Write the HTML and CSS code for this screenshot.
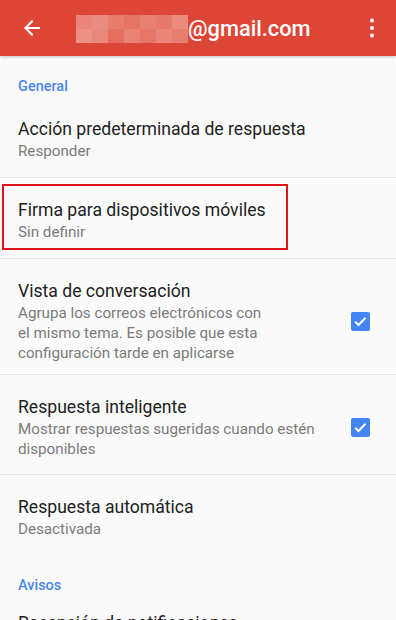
FILE: index.html
```html
<!DOCTYPE html>
<html lang="es">
<head>
<meta charset="utf-8">
<title>Ajustes</title>
<link rel="stylesheet" href="styles.css">
</head>
<body>
<div class="screen">
  <header class="appbar">
    <button class="icon-btn back" aria-label="Atrás">
      <svg width="24" height="24" viewBox="0 0 24 24"><path d="M20 11H7.83l5.59-5.59L12 4l-8 8 8 8 1.41-1.41L7.83 13H20v-2z" fill="#fff"/></svg>
    </button>
    <div class="title">
      <span class="mosaic" aria-hidden="true">
        <i class="m1"></i><i class="m2"></i><i class="m3"></i><i class="m4"></i><i class="m5"></i><i class="m6"></i><i class="m7"></i>
        <i class="m8"></i><i class="m9"></i><i class="m10"></i><i class="m11"></i><i class="m12"></i><i class="m13"></i><i class="m14"></i>
      </span><span class="domain">@gmail.com</span>
    </div>
    <button class="icon-btn more" aria-label="Más opciones">
      <svg width="24" height="24" viewBox="0 0 24 24"><circle cx="12" cy="4.5" r="2" fill="#fff"/><circle cx="12" cy="12" r="2" fill="#fff"/><circle cx="12" cy="19.5" r="2" fill="#fff"/></svg>
    </button>
  </header>

  <main class="list">
    <div class="section">General</div>

    <div class="row">
      <div class="text">
        <div class="primary">Acción predeterminada de respuesta</div>
        <div class="secondary">Responder</div>
      </div>
    </div>

    <div class="row highlighted">
      <div class="text">
        <div class="primary">Firma para dispositivos móviles</div>
        <div class="secondary">Sin definir</div>
      </div>
      <span class="mark" aria-hidden="true"></span>
    </div>

    <div class="row three">
      <div class="text">
        <div class="primary">Vista de conversación</div>
        <div class="secondary">Agrupa los correos electrónicos con<br>el mismo tema. Es posible que esta<br>configuración tarde en aplicarse</div>
      </div>
      <span class="check"><svg width="19" height="19" viewBox="0 0 19 19"><path d="M4.2 9.8l3.3 3.2 7-7.2" fill="none" stroke="#fff" stroke-width="2"/></svg></span>
    </div>

    <div class="row two">
      <div class="text">
        <div class="primary">Respuesta inteligente</div>
        <div class="secondary">Mostrar respuestas sugeridas cuando estén<br>disponibles</div>
      </div>
      <span class="check"><svg width="19" height="19" viewBox="0 0 19 19"><path d="M4.2 9.8l3.3 3.2 7-7.2" fill="none" stroke="#fff" stroke-width="2"/></svg></span>
    </div>

    <div class="row last">
      <div class="text">
        <div class="primary">Respuesta automática</div>
        <div class="secondary">Desactivada</div>
      </div>
    </div>

    <div class="section short">Avisos</div>

    <div class="row">
      <div class="text">
        <div class="primary">Recepción de notificaciones</div>
        <div class="secondary">Activadas</div>
      </div>
    </div>
  </main>
</div>
</body>
</html>
```

FILE: styles.css
```css
* { box-sizing: border-box; }
html, body { margin: 0; padding: 0; }
body {
  background: #fafafa;
  font-family: Roboto, "Noto Sans", "Liberation Sans", sans-serif;
  width: 396px;
  height: 620px;
  overflow: hidden;
}
.screen { display: flex; flex-direction: column; }

.appbar {
  height: 56px;
  background: #dd4536;
  display: flex;
  align-items: center;
  padding: 0 12px 0 20px;
  box-shadow: 0 1px 3px rgba(0,0,0,0.22);
  position: relative;
  z-index: 1;
}
.icon-btn {
  background: none;
  border: 0;
  padding: 0;
  width: 24px;
  height: 24px;
  display: flex;
  align-items: center;
  justify-content: center;
}
.title {
  flex: 1;
  display: flex;
  align-items: center;
  margin-left: 32px;
  color: #fff;
  font-size: 21.8px;
  font-weight: 500;
}
.mosaic {
  display: grid;
  grid-template-columns: repeat(7, 16px);
  grid-template-rows: 14px 14px;
  width: 112px;
  height: 28px;
  margin-top: 1px;
}
.mosaic i { display: block; }
.m1 { background: #e98679; } .m2 { background: #ea8c80; } .m3 { background: #e77c6f; } .m4 { background: #e57466; }
.m5 { background: #e88173; } .m6 { background: #e77a6d; } .m7 { background: #ea8b7e; }
.m8 { background: #ec9184; } .m9 { background: #e9887b; } .m10 { background: #e46f61; } .m11 { background: #e88476; }
.m12 { background: #e57769; } .m13 { background: #e98679; } .m14 { background: #e77f71; }

.list { display: flex; flex-direction: column; }
.section {
  padding: 22px 18px 0;
  height: 41px;
  line-height: 17px;
  font-size: 14.5px;
  font-weight: 500;
  color: #4a86e8;
}
.section.short { height: 36px; }
.row {
  position: relative;
  display: flex;
  align-items: center;
  padding: 20px 26px 16px 18px;
  border-bottom: 1px solid #e3e3e3;
}
.row.three { padding-bottom: 11px; }
.row.two { padding-bottom: 15px; }
.row.last { border-bottom: 0; }
.text { flex: 1; }
.primary {
  font-size: 17.6px;
  line-height: 24px;
  color: #212121;
}
.secondary {
  font-size: 15.2px;
  line-height: 20px;
  color: #7a7a7a;
}
.check {
  width: 19px;
  height: 19px;
  border-radius: 2px;
  background: #4285f4;
  display: flex;
}
.mark {
  position: absolute;
  left: 2px;
  top: 6px;
  width: 286px;
  height: 66px;
  border: 2px solid #e3161d;
}
```
